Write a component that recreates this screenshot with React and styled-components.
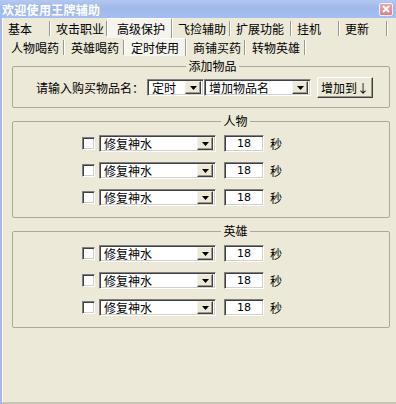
import React from 'react'
import styled, { createGlobalStyle } from 'styled-components';

const GlobalStyle = createGlobalStyle`
    body{margin: 0; background: #ece9d8; font-family: "SimSun", "Noto Sans CJK SC", "Liberation Sans", sans-serif; font-size: 12px; color: #000}
    *{box-sizing: border-box}
`;

const Window = styled.div`
    width: 396px; height: 404px; display: flex; flex-direction: column; overflow: hidden; background: #ece9d8;
`;

const TitleBar = styled.div`
    height: 18px; flex-shrink: 0; display: flex; align-items: center; justify-content: space-between; padding: 0 2px 0 2px;
    background: linear-gradient(180deg, #b4c8f0 0%, #9fb8ea 45%, #a6bef0 100%);
    color: #fff; font-weight: bold; font-size: 12px; line-height: 15px; letter-spacing: 0.3px;
`;

const CloseBtn = styled.div`
    width: 14px; height: 13px; border: 1px solid #f4f0f4; border-radius: 2px; background: linear-gradient(180deg, #e6a8a8, #d98484);
    display: flex; align-items: center; justify-content: center; margin-right: 1px;
`;

const Body = styled.div`
    flex: 1; display: flex; flex-direction: column; border-left: 2px solid #a9b8e6; box-shadow: inset 1px 0 0 #fff;
`;

const TabRow = styled.div`
    display: flex; align-items: center; height: ${p => p.$h}px; padding-left: ${p => p.$indent}px; flex-shrink: 0;
`;

const Tab = styled.div`
    width: ${p => p.$w}px; height: ${p => p.$active ? '100%' : '15px'}; display: flex; align-items: center;
    padding-left: ${p => p.$pad}px; line-height: 15px; white-space: nowrap;
    border-right: 1px solid #9a9888; box-shadow: 1px 0 0 #fff;
    background: ${p => p.$active ? '#f5f4ee' : 'transparent'};
    border-left: ${p => p.$active ? '1px solid #fff' : 'none'};
    border-top: ${p => p.$active ? '1px solid #fff' : 'none'};
`;

const Panel = styled.div`
    flex: 1; padding: 3px 6px 0 10px; display: flex; flex-direction: column; gap: 6px;
    border-bottom: 2px solid #c8c5b4;
`;

const Group = styled.fieldset`
    margin: 0; min-width: 0; border: 1px solid #aca899; border-radius: 2px;
    padding: ${p => p.$pt}px 0 ${p => p.$pb}px ${p => p.$pl}px;
    display: flex; flex-direction: column; gap: ${p => p.$gap || 10}px;
`;

const Legend = styled.legend`
    margin: 0 auto; padding: 0 2px; line-height: 14px; font-size: 12px;
`;

const Row = styled.div`
    display: flex; align-items: center; height: ${p => p.$h || 17}px;
`;

const Label = styled.span`
    line-height: 15px; margin-right: 3px; white-space: nowrap;
`;

const Sunken = styled.div`
    background: #fff; border: 1px solid; border-color: #808080 #fff #fff #808080;
    box-shadow: inset 1px 1px 0 #404040, inset -1px -1px 0 #d4d0c8;
`;

const Select = styled(Sunken)`
    width: ${p => p.$w}px; height: ${p => p.$h || 17}px; display: flex; align-items: center; padding: 1px 2px 1px 4px;
    margin-left: ${p => p.$ml || 0}px;
    span{flex: 1; line-height: 15px; white-space: nowrap}
`;

const Arrow = styled.div`
    width: 16px; height: 13px; flex-shrink: 0; background: #ece9d8; display: flex; align-items: center; justify-content: center;
    border: 1px solid; border-color: #f4f2e8 #404040 #404040 #f4f2e8; box-shadow: inset -1px -1px 0 #9d9a8a;
`;

const Check = styled(Sunken)`
    width: 13px; height: 13px; margin-right: 4px;
`;

const NumBox = styled(Sunken)`
    width: 40px; height: 17px; margin-left: 8px; display: flex; align-items: center; justify-content: center;
    font-family: "DejaVu Sans", "Liberation Sans", sans-serif; font-size: 11px; line-height: 15px;
`;

const Unit = styled.span`
    margin-left: 6px; line-height: 15px;
`;

const Button = styled.div`
    width: 56px; height: 21px; margin-left: 6px; display: flex; align-items: center; justify-content: center;
    background: #ece9d8; border: 1px solid; border-color: #fff #404040 #404040 #fff;
    box-shadow: inset -1px -1px 0 #9d9a8a; line-height: 15px;
`;

const DownArrow = () => (
    <svg width="7" height="4" viewBox="0 0 7 4"><path d="M0 0h7L3.5 4z" fill="#000"/></svg>
);

function Combo({w, text, ml}) {
  return (
    <Select $w={w} $ml={ml}>
        <span>{text}</span>
        <Arrow><DownArrow /></Arrow>
    </Select>
  )
}

const mainTabs = [
    ['基本', 48], ['攻击职业', 57], ['高级保护', 65, true], ['飞捡辅助', 58], ['扩展功能', 61], ['挂机', 48], ['更新', 48]
];
const subTabs = [
    ['人物喝药', 60], ['英雄喝药', 60], ['定时使用', 62, true], ['商铺买药', 59], ['转物英雄', 60]
];

function TimerGroup({title}) {
  return (
    <Group $pt={7} $pb={11} $pl={69}>
        <Legend>{title}</Legend>
        {[0, 1, 2].map(i => (
            <Row key={i}>
                <Check />
                <Combo w={117} text="修复神水" />
                <NumBox>18</NumBox>
                <Unit>秒</Unit>
            </Row>
        ))}
    </Group>
  )
}

export default function App() {
  return (
    <Window>
        <GlobalStyle />
        <TitleBar>
            <span>欢迎使用王牌辅助</span>
            <CloseBtn>
                <svg width="8" height="8" viewBox="0 0 8 8"><path d="M1 1L7 7M7 1L1 7" stroke="#fff" strokeWidth="2"/></svg>
            </CloseBtn>
        </TitleBar>
        <Body>
            <TabRow $h={20} $indent={0}>
                {mainTabs.map(([t, w, a]) => <Tab key={t} $w={w} $pad={a ? 9 : 6} $active={a}>{t}</Tab>)}
            </TabRow>
            <TabRow $h={18} $indent={2}>
                {subTabs.map(([t, w, a]) => <Tab key={t} $w={w} $pad={a ? 6 : 7} $active={a}>{t}</Tab>)}
            </TabRow>
            <Panel>
                <Group $pt={4} $pb={9} $pl={23}>
                    <Legend>添加物品</Legend>
                    <Row $h={21}>
                        <Label>请输入购买物品名：</Label>
                        <Combo w={57} text="定时" />
                        <Combo w={107} text="增加物品名" />
                        <Button>增加到↓</Button>
                    </Row>
                </Group>
                <TimerGroup title="人物" />
                <TimerGroup title="英雄" />
            </Panel>
        </Body>
    </Window>
  )
}
